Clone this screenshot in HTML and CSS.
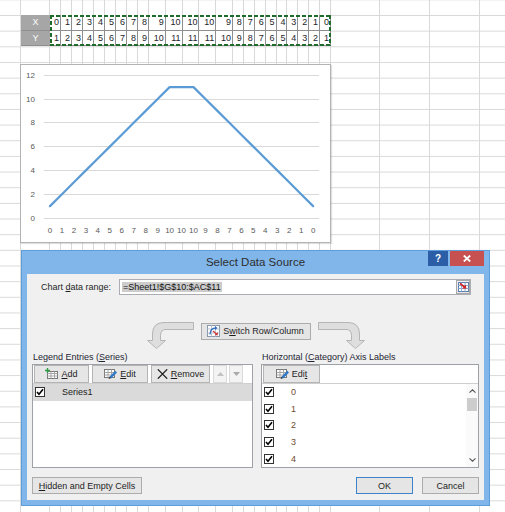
FILE: index.html
```html
<!DOCTYPE html>
<html>
<head>
<meta charset="utf-8">
<link rel="stylesheet" href="styles.css">
</head>
<body>
<div class="sheet">
  <div class="cols">
    <div class="col c-a"></div><div class="col c-b"></div>
    <div class="col c-n"></div><div class="col c-n"></div><div class="col c-n"></div><div class="col c-n"></div><div class="col c-n"></div><div class="col c-n"></div><div class="col c-n"></div><div class="col c-n"></div><div class="col c-n"></div>
    <div class="col c-w"></div><div class="col c-w"></div><div class="col c-w"></div><div class="col c-w"></div><div class="col c-w"></div>
    <div class="col c-m"></div><div class="col c-m"></div><div class="col c-m"></div><div class="col c-m"></div><div class="col c-m"></div><div class="col c-m"></div><div class="col c-m"></div><div class="col c-m"></div><div class="col c-m"></div>
    <div class="col c-49"></div><div class="col c-50"></div><div class="col c-50"></div><div class="col c-50"></div>
  </div>
  <div class="cells">
    <div class="range">
      <div class="rrow">
        <div class="hcell">X</div>
        <div class="dcell n">0</div><div class="dcell n">1</div><div class="dcell n">2</div><div class="dcell n">3</div><div class="dcell n">4</div><div class="dcell n">5</div><div class="dcell n">6</div><div class="dcell n">7</div><div class="dcell n">8</div>
        <div class="dcell w">9</div><div class="dcell w">10</div><div class="dcell w">10</div><div class="dcell w">10</div><div class="dcell w">9</div>
        <div class="dcell m">8</div><div class="dcell m">7</div><div class="dcell m">6</div><div class="dcell m">5</div><div class="dcell m">4</div><div class="dcell m">3</div><div class="dcell m">2</div><div class="dcell m">1</div><div class="dcell m">0</div>
      </div>
      <div class="rrow">
        <div class="hcell">Y</div>
        <div class="dcell n">1</div><div class="dcell n">2</div><div class="dcell n">3</div><div class="dcell n">4</div><div class="dcell n">5</div><div class="dcell n">6</div><div class="dcell n">7</div><div class="dcell n">8</div><div class="dcell n">9</div>
        <div class="dcell w">10</div><div class="dcell w">11</div><div class="dcell w">11</div><div class="dcell w">11</div><div class="dcell w">10</div>
        <div class="dcell m">9</div><div class="dcell m">8</div><div class="dcell m">7</div><div class="dcell m">6</div><div class="dcell m">5</div><div class="dcell m">4</div><div class="dcell m">3</div><div class="dcell m">2</div><div class="dcell m">1</div>
      </div>
      <div class="ants"></div>
    </div>
  </div>

  <div class="chart">
    <svg width="309" height="177" viewBox="1 1 309 177">
      <g class="grid">
        <line x1="24" y1="11.5" x2="299" y2="11.5"/>
        <line x1="24" y1="35.5" x2="299" y2="35.5"/>
        <line x1="24" y1="58.5" x2="299" y2="58.5"/>
        <line x1="24" y1="82.5" x2="299" y2="82.5"/>
        <line x1="24" y1="106.5" x2="299" y2="106.5"/>
        <line x1="24" y1="130.5" x2="299" y2="130.5"/>
        <line x1="24" y1="154.5" x2="299" y2="154.5"/>
      </g>
      <g class="ylab">
        <text x="15" y="14">12</text>
        <text x="15" y="38">10</text>
        <text x="15" y="61">8</text>
        <text x="15" y="85">6</text>
        <text x="15" y="109">4</text>
        <text x="15" y="133">2</text>
        <text x="15" y="157">0</text>
      </g>
      <g class="xlab">
        <text x="30" y="169">0</text>
        <text x="41.96" y="169">1</text>
        <text x="53.92" y="169">2</text>
        <text x="65.88" y="169">3</text>
        <text x="77.84" y="169">4</text>
        <text x="89.8" y="169">5</text>
        <text x="101.76" y="169">6</text>
        <text x="113.72" y="169">7</text>
        <text x="125.68" y="169">8</text>
        <text x="137.64" y="169">9</text>
        <text x="149.6" y="169">10</text>
        <text x="161.56" y="169">10</text>
        <text x="173.52" y="169">10</text>
        <text x="185.48" y="169">9</text>
        <text x="197.44" y="169">8</text>
        <text x="209.4" y="169">7</text>
        <text x="221.36" y="169">6</text>
        <text x="233.32" y="169">5</text>
        <text x="245.28" y="169">4</text>
        <text x="257.24" y="169">3</text>
        <text x="269.2" y="169">2</text>
        <text x="281.16" y="169">1</text>
        <text x="293.12" y="169">0</text>
      </g>
      <polyline class="series" points="30,142.1 41.96,130.2 53.92,118.3 65.88,106.4 77.84,94.5 89.8,82.6 101.76,70.7 113.72,58.8 125.68,46.9 137.64,35 149.6,23.1 161.56,23.1 173.52,23.1 185.48,35 197.44,46.9 209.4,58.8 221.36,70.7 233.32,82.6 245.28,94.5 257.24,106.4 269.2,118.3 281.16,130.2 293.12,142.1"/>
    </svg>
  </div>

  <div class="dialog">
    <div class="titlebar">
      <div></div>
      <div class="title">Select Data Source</div>
      <div class="tbtns">
        <div class="help">?</div>
        <div class="close"><svg width="8" height="7" viewBox="0 0 8 7"><path d="M0.8 0.5 L7.2 6.5 M7.2 0.5 L0.8 6.5" stroke="#fff" stroke-width="1.8"/></svg></div>
      </div>
    </div>
    <div class="client">
      <div class="range-row">
        <div class="lbl">Chart <u>d</u>ata range:</div>
        <div class="input">
          <span class="sel">=Sheet1!$G$10:$AC$11</span>
          <div class="rbtn">
            <svg width="11" height="10" viewBox="0 0 11 10">
              <rect x="0.5" y="0.5" width="10" height="9" fill="#fff" stroke="#5d7fb0"/>
              <path d="M0.5 3.5h10 M0.5 6.5h10 M3.5 0.5v9 M7 0.5v9" stroke="#8fa9cf"/>
              <path d="M2 1.5 L6.5 5" stroke="#d42424" stroke-width="1.6"/>
              <path d="M4.2 6.6 L8.4 6.8 L7.8 2.8 Z" fill="#d42424"/>
            </svg>
          </div>
        </div>
      </div>
      <div class="switch-row">
        <svg class="arrow" width="47" height="27" viewBox="0 0 47 27"><path d="M46.5 0.5 H17 Q5.5 0.5 5.5 12 V18.5 H0.5 L9.5 26.5 L18.5 18.5 H13.5 V13.5 Q13.5 7.5 19 7.5 H46.5 Z" fill="#dedede" stroke="#b5b5b5"/></svg>
        <div class="btn switch">
          <svg width="13" height="12" viewBox="0 0 13 12">
            <rect x="0.5" y="0.5" width="12" height="11" fill="#fff" stroke="#8796ab"/>
            <path d="M0.5 4h12 M0.5 8h12 M4.5 0.5v11 M8.5 0.5v11" stroke="#b9c3d2"/>
            <path d="M3 9.5 Q3 3 9 3" fill="none" stroke="#2f6fbf" stroke-width="1.3"/>
            <path d="M8 1 L10.5 3 L8 5 Z" fill="#2f6fbf"/>
            <path d="M6 6 L10 9.5" stroke="#d03a3a" stroke-width="1.3"/>
            <path d="M10.8 7 L10.8 10.3 L7.6 10.3 Z" fill="#d03a3a"/>
          </svg>
          <span>S<u>w</u>itch Row/Column</span>
        </div>
        <svg class="arrow flip" width="47" height="27" viewBox="0 0 47 27"><path d="M46.5 0.5 H17 Q5.5 0.5 5.5 12 V18.5 H0.5 L9.5 26.5 L18.5 18.5 H13.5 V13.5 Q13.5 7.5 19 7.5 H46.5 Z" fill="#dedede" stroke="#b5b5b5"/></svg>
      </div>
      <div class="panels">
        <div class="panel">
          <div class="plabel">Legend Entries (<u>S</u>eries)</div>
          <div class="box">
            <div class="toolbar">
              <div class="tbtn b-add">
                <svg width="13" height="11" viewBox="0 0 13 11">
                  <rect x="2.5" y="3.5" width="10" height="7" fill="#fff" stroke="#777"/>
                  <path d="M2.5 5.5h10 M2.5 8h10 M6 3.5v7 M9.5 3.5v7" stroke="#a5a5a5"/>
                  <path d="M0 2.5h5 M2.5 0v5" stroke="#2e9b46" stroke-width="1.3"/>
                </svg>
                <span><u>A</u>dd</span>
              </div>
              <div class="tbtn b-edit">
                <svg width="13" height="11" viewBox="0 0 13 11">
                  <rect x="0.5" y="1.5" width="10" height="8" fill="#fff" stroke="#777"/>
                  <path d="M0.5 4.5h10 M0.5 7h10 M4 1.5v8 M7.5 1.5v8" stroke="#a5a5a5"/>
                  <path d="M6.3 9.6 L12.2 3.7" stroke="#2f78c8" stroke-width="2.4"/>
                  <path d="M4.6 11 L5.4 8.6 L7 10.2 Z" fill="#3a3a3a"/>
                </svg>
                <span><u>E</u>dit</span>
              </div>
              <div class="tbtn b-remove">
                <svg width="11" height="10" viewBox="0 0 11 10"><path d="M0.8 0.3 L10.2 9.7 M10.2 0.3 L0.8 9.7" stroke="#1c1c1c" stroke-width="1.2"/></svg>
                <span><u>R</u>emove</span>
              </div>
              <div class="tbtn b-arrow dis"><svg width="7" height="4" viewBox="0 0 7 4"><path d="M0 4 L3.5 0 L7 4 Z" fill="#c2c2c2"/></svg></div>
              <div class="tbtn b-arrow dis"><svg width="7" height="4" viewBox="0 0 7 4"><path d="M0 0 L3.5 4 L7 0 Z" fill="#a9a9a9"/></svg></div>
            </div>
            <div class="list">
              <div class="item selected">
                <svg class="cb" width="10" height="10" viewBox="0 0 10 10"><rect x="0.5" y="0.5" width="9" height="9" fill="#fff" stroke="#333"/><path d="M2 5 L4 7.3 L8 2.3" fill="none" stroke="#000" stroke-width="1.6"/></svg>
                <span class="itxt">Series1</span>
              </div>
            </div>
          </div>
        </div>
        <div class="panel">
          <div class="plabel">Horizontal (<u>C</u>ategory) Axis Labels</div>
          <div class="box">
            <div class="toolbar">
              <div class="tbtn b-edit2">
                <svg width="13" height="11" viewBox="0 0 13 11">
                  <rect x="0.5" y="1.5" width="10" height="8" fill="#fff" stroke="#777"/>
                  <path d="M0.5 4.5h10 M0.5 7h10 M4 1.5v8 M7.5 1.5v8" stroke="#a5a5a5"/>
                  <path d="M6.3 9.6 L12.2 3.7" stroke="#2f78c8" stroke-width="2.4"/>
                  <path d="M4.6 11 L5.4 8.6 L7 10.2 Z" fill="#3a3a3a"/>
                </svg>
                <span>Edi<u>t</u></span>
              </div>
            </div>
            <div class="list scroll">
              <div class="items">
                <div class="item"><svg class="cb" width="10" height="10" viewBox="0 0 10 10"><rect x="0.5" y="0.5" width="9" height="9" fill="#fff" stroke="#333"/><path d="M2 5 L4 7.3 L8 2.3" fill="none" stroke="#000" stroke-width="1.6"/></svg><span class="itxt num">0</span></div>
                <div class="item"><svg class="cb" width="10" height="10" viewBox="0 0 10 10"><rect x="0.5" y="0.5" width="9" height="9" fill="#fff" stroke="#333"/><path d="M2 5 L4 7.3 L8 2.3" fill="none" stroke="#000" stroke-width="1.6"/></svg><span class="itxt num">1</span></div>
                <div class="item"><svg class="cb" width="10" height="10" viewBox="0 0 10 10"><rect x="0.5" y="0.5" width="9" height="9" fill="#fff" stroke="#333"/><path d="M2 5 L4 7.3 L8 2.3" fill="none" stroke="#000" stroke-width="1.6"/></svg><span class="itxt num">2</span></div>
                <div class="item"><svg class="cb" width="10" height="10" viewBox="0 0 10 10"><rect x="0.5" y="0.5" width="9" height="9" fill="#fff" stroke="#333"/><path d="M2 5 L4 7.3 L8 2.3" fill="none" stroke="#000" stroke-width="1.6"/></svg><span class="itxt num">3</span></div>
                <div class="item"><svg class="cb" width="10" height="10" viewBox="0 0 10 10"><rect x="0.5" y="0.5" width="9" height="9" fill="#fff" stroke="#333"/><path d="M2 5 L4 7.3 L8 2.3" fill="none" stroke="#000" stroke-width="1.6"/></svg><span class="itxt num">4</span></div>
              </div>
              <div class="sbar">
                <div class="sbtn"><svg width="7" height="4" viewBox="0 0 7 4"><path d="M0.5 3.6 L3.5 0.8 L6.5 3.6" fill="none" stroke="#555" stroke-width="1.1"/></svg></div>
                <div class="strack"><div class="thumb"></div></div>
                <div class="sbtn"><svg width="7" height="4" viewBox="0 0 7 4"><path d="M0.5 0.4 L3.5 3.2 L6.5 0.4" fill="none" stroke="#555" stroke-width="1.1"/></svg></div>
              </div>
            </div>
          </div>
        </div>
      </div>
      <div class="footer">
        <div class="btn b-hidden"><u>H</u>idden and Empty Cells</div>
        <div class="btn b-ok">OK</div>
        <div class="btn b-cancel">Cancel</div>
      </div>
    </div>
  </div>
</div>
</body>
</html>
```

FILE: styles.css
```css
* { box-sizing: border-box; }
html, body { margin: 0; padding: 0; }
body {
  width: 505px;
  height: 512px;
  overflow: hidden;
  background: #fff;
  font-family: "Liberation Sans", Arial, sans-serif;
}

/* ---------- spreadsheet ---------- */
.sheet {
  position: relative;
  width: 505px;
  height: 512px;
  overflow: hidden;
  display: grid;
  background-color: #fff;
  background-image: linear-gradient(to bottom, #d9d9d9 0, #d9d9d9 1px, transparent 1px);
  background-size: 100% 15.66px;
  background-position: 0 15px;
}
.sheet > .cols,
.sheet > .cells { grid-area: 1 / 1; }

.cols { display: flex; height: 512px; }
.col { flex: none; height: 100%; border-right: 1px solid #d9d9d9; }
.c-a { width: 21px; }
.c-b { width: 29px; }
.c-n { width: 11px; }
.c-w { width: 16.8px; }
.c-m { width: 10.9px; }
.c-49 { width: 49px; }
.c-50 { width: 50px; }

.cells { align-self: start; justify-self: start; }
.range { position: relative; margin: 15px 0 0 21px; width: max-content; }
.rrow { display: flex; height: 15.66px; }
.hcell {
  width: 29px;
  background: #a6a6a6;
  color: #fff;
  font-size: 9px;
  line-height: 15px;
  text-align: center;
  border-bottom: 1px solid #8f8f8f;
}
.dcell {
  background: #fff;
  border-right: 1px solid #8e8e8e;
  border-bottom: 1px solid #8e8e8e;
  color: #1e1e2a;
  font-size: 9px;
  line-height: 15px;
  text-align: right;
  padding-right: 1px;
}
.dcell.n { width: 11px; }
.dcell.w { width: 16.8px; }
.dcell.m { width: 10.9px; }

.ants {
  position: absolute;
  left: 29px; top: 0; right: 0; bottom: 0;
  pointer-events: none;
  background:
    repeating-linear-gradient(90deg, #1f6b2c 0 4px, transparent 4px 6px) left top / 100% 2px no-repeat,
    repeating-linear-gradient(90deg, #1f6b2c 0 4px, transparent 4px 6px) left bottom / 100% 2px no-repeat,
    repeating-linear-gradient(180deg, #1f6b2c 0 4px, transparent 4px 6px) left top / 2px 100% no-repeat,
    repeating-linear-gradient(180deg, #1f6b2c 0 4px, transparent 4px 6px) right top / 2px 100% no-repeat;
}

/* ---------- chart ---------- */
.chart {
  position: absolute;
  left: 20px; top: 64px;
  width: 311px; height: 179px;
  background: #fff;
  border: 1px solid #b3b3b3;
  box-shadow: 1px 1px 1px rgba(0,0,0,0.12);
}
.chart svg { display: block; }
.chart .grid line { stroke: #d9d9d9; stroke-width: 1; }
.chart text { font-family: "Liberation Sans", Arial, sans-serif; font-size: 8px; fill: #595959; }
.chart .ylab text { text-anchor: end; }
.chart .xlab text { text-anchor: middle; }
.chart .series { fill: none; stroke: #5b9bd5; stroke-width: 2.2; stroke-linejoin: round; stroke-linecap: round; }

/* ---------- dialog ---------- */
.dialog {
  position: absolute;
  left: 21px; top: 250px;
  width: 469px; height: 256px;
  background: #80b6ea;
  border: 1px solid #5d9ddb;
  padding: 0 5px 5px;
  display: flex;
  flex-direction: column;
  font-size: 9px;
  color: #1e1e1e;
}
.titlebar {
  height: 23px;
  flex: none;
  display: grid;
  grid-template-columns: 1fr auto 1fr;
  align-items: start;
}
.title {
  font-size: 11.5px;
  line-height: 22px;
  color: #2e2e2e;
}
.tbtns { justify-self: end; display: flex; gap: 2px; }
.help {
  width: 20px; height: 15px;
  background: #2c5ea8;
  color: #fff;
  font-weight: bold;
  font-size: 10px;
  line-height: 15px;
  text-align: center;
}
.close {
  width: 34px; height: 15px;
  background: #c75050;
  display: flex; align-items: center; justify-content: center;
}
.close svg { display: block; }

.client {
  flex: 1;
  background: #f0f0f0;
  padding: 5px 5px 0;
  display: flex;
  flex-direction: column;
}

.range-row { display: flex; align-items: center; height: 16px; }
.lbl { margin-left: 9px; }
.input {
  margin-left: auto;
  margin-right: 8px;
  width: 352px;
  height: 16px;
  background: #fff;
  border: 1px solid #abadb3;
  display: flex;
  align-items: center;
  padding-left: 2px;
}
.sel { background: #cccccc; color: #111; line-height: 10px; padding: 0 1px; }
.rbtn {
  margin-left: auto;
  margin-right: 0;
  width: 14px; height: 14px;
  border: 1px solid #a9a9a9;
  background: linear-gradient(#f4f4f4, #e3e3e3);
  display: flex; align-items: center; justify-content: center;
}
.rbtn svg { display: block; }

.switch-row {
  margin-top: 26.5px;
  height: 27px;
  display: flex;
  justify-content: center;
  align-items: flex-start;
  gap: 7px;
}
.arrow { display: block; flex: none; }
.arrow.flip { transform: scaleX(-1); }

.btn {
  background: #e5e5e5;
  border: 1px solid #acacac;
  display: flex;
  align-items: center;
  justify-content: center;
  color: #1e1e1e;
}
.switch { width: 110px; height: 17px; margin-top: 1px; gap: 3px; }
.switch svg { display: block; }

.panels {
  margin-top: 3px;
  display: grid;
  grid-template-columns: 221px 218px;
  column-gap: 8px;
}
.plabel { height: 12px; line-height: 11px; padding-left: 1px; color: #1f2533; }
.box {
  height: 104px;
  border: 1px solid #9ea1a6;
  background: #fff;
  display: flex;
  flex-direction: column;
}
.toolbar {
  height: 19px;
  flex: none;
  border-bottom: 1px solid #cfcfcf;
  display: flex;
  align-items: flex-start;
  padding-left: 1px;
  gap: 3px;
}
.tbtn {
  height: 18px;
  background: #e6e6e6;
  border: 1px solid #b4b4b4;
  display: flex;
  align-items: center;
  justify-content: center;
  gap: 3px;
}
.tbtn svg { display: block; }
.b-add { width: 55px; }
.b-edit { width: 56px; }
.b-remove { width: 59px; }
.b-arrow { width: 14px; margin-right: -1px; }
.b-edit2 { width: 57px; }
.tbtn.dis { background: #f3f3f3; border-color: #dadada; }

.list { flex: 1; display: flex; flex-direction: column; overflow: hidden; }
.list.scroll { flex-direction: row; }
.items { flex: 1; }
.item {
  height: 16.7px;
  display: flex;
  align-items: center;
}
.item.selected { background: #dadada; height: 17.5px; }
.cb { display: block; margin-left: 2px; flex: none; }
.itxt { margin-left: 17px; color: #222; }
.num { color: #6e4a30; }

.sbar { width: 12px; flex: none; display: flex; flex-direction: column; background: #fafafa; }
.sbtn { height: 14px; display: flex; align-items: center; justify-content: center; }
.sbtn svg { display: block; }
.strack { flex: 1; }
.thumb { height: 13px; margin: 0 1px; background: #cdcdcd; }

.footer {
  margin-top: 9.5px;
  display: flex;
  gap: 9px;
}
.footer .btn { height: 17px; }
.b-hidden { width: 110px; }
.b-ok { width: 57px; margin-left: auto; border-color: #3d83c9; }
.b-cancel { width: 57px; }
```
